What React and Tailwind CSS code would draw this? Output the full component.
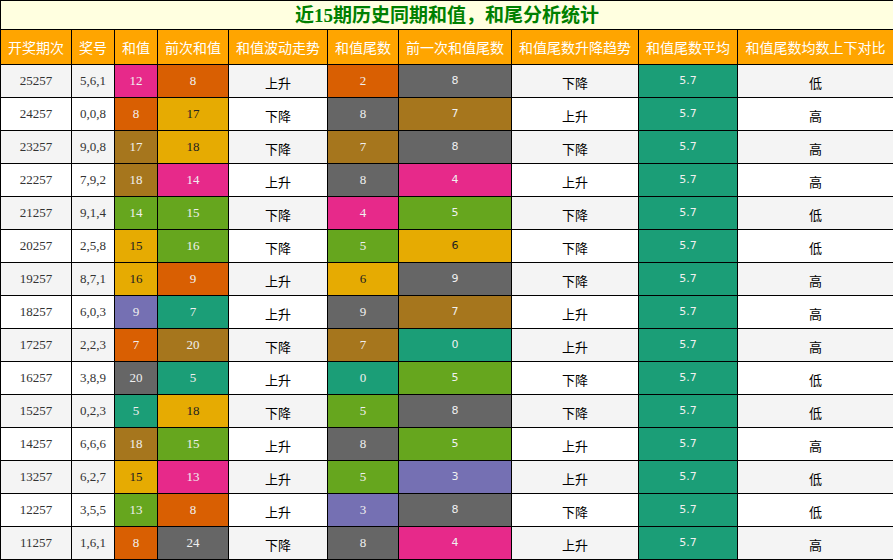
import React from 'react';

const C = {
  pink: 'bg-[#e7298a] text-[#f0f0f0]',
  orange: 'bg-[#d95f02] text-[#f0f0f0]',
  yellow: 'bg-[#e6ab02] text-[#222]',
  gray: 'bg-[#666666] text-[#f0f0f0]',
  brown: 'bg-[#a6761d] text-[#f0f0f0]',
  green: 'bg-[#66a61e] text-[#f0f0f0]',
  purple: 'bg-[#7570b3] text-[#f0f0f0]',
  teal: 'bg-[#1b9e77] text-[#f0f0f0]',
};

const headers = ['开奖期次', '奖号', '和值', '前次和值', '和值波动走势', '和值尾数', '前一次和值尾数', '和值尾数升降趋势', '和值尾数平均', '和值尾数均数上下对比'];
const widths = ['w-[71px]', 'w-[43px]', 'w-[43px]', 'w-[71px]', 'w-[99px]', 'w-[71px]', 'w-[113px]', 'w-[127px]', 'w-[99px]', 'w-[156px]'];

const rows = [
  ['25257', '5,6,1', 12, 'pink', 8, 'orange', '上升', 2, 'orange', 8, 'gray', '下降', '低'],
  ['24257', '0,0,8', 8, 'orange', 17, 'yellow', '下降', 8, 'gray', 7, 'brown', '上升', '高'],
  ['23257', '9,0,8', 17, 'brown', 18, 'yellow', '下降', 7, 'brown', 8, 'gray', '下降', '高'],
  ['22257', '7,9,2', 18, 'brown', 14, 'pink', '上升', 8, 'gray', 4, 'pink', '上升', '高'],
  ['21257', '9,1,4', 14, 'green', 15, 'green', '下降', 4, 'pink', 5, 'green', '下降', '低'],
  ['20257', '2,5,8', 15, 'yellow', 16, 'green', '下降', 5, 'green', 6, 'yellow', '下降', '低'],
  ['19257', '8,7,1', 16, 'yellow', 9, 'orange', '上升', 6, 'yellow', 9, 'gray', '下降', '高'],
  ['18257', '6,0,3', 9, 'purple', 7, 'teal', '上升', 9, 'gray', 7, 'brown', '上升', '高'],
  ['17257', '2,2,3', 7, 'orange', 20, 'brown', '下降', 7, 'brown', 0, 'teal', '上升', '高'],
  ['16257', '3,8,9', 20, 'gray', 5, 'teal', '上升', 0, 'teal', 5, 'green', '下降', '低'],
  ['15257', '0,2,3', 5, 'teal', 18, 'yellow', '下降', 5, 'green', 8, 'gray', '下降', '低'],
  ['14257', '6,6,6', 18, 'brown', 15, 'green', '上升', 8, 'gray', 5, 'green', '上升', '高'],
  ['13257', '6,2,7', 15, 'yellow', 13, 'pink', '上升', 5, 'green', 3, 'purple', '上升', '低'],
  ['12257', '3,5,5', 13, 'green', 8, 'orange', '上升', 3, 'purple', 8, 'gray', '下降', '低'],
  ['11257', '1,6,1', 8, 'orange', 24, 'gray', '下降', 8, 'gray', 4, 'pink', '上升', '高'],
];

const serif = "font-['Liberation_Serif','Noto_Sans_CJK_SC',serif]";
const sans = "font-['DejaVu_Sans','Noto_Sans_CJK_SC',sans-serif]";
const cjk = "font-['Noto_Sans_CJK_SC',sans-serif]";

export default function App() {
  return (
    <div className="w-[893px] h-[560px] bg-white overflow-hidden">
      <table className="w-[893px] table-fixed border-collapse text-center">
        <colgroup>
          {widths.map((w, i) => <col key={i} className={w} />)}
        </colgroup>
        <thead>
          <tr>
            <th colSpan={10} className={`h-[29px] border border-black bg-[#ffffe0] text-[#008000] text-[19px] font-bold leading-none p-0 ${serif}`}>
              近15期历史同期和值，和尾分析统计
            </th>
          </tr>
          <tr>
            {headers.map((h) => (
              <th key={h} className={`h-[35px] border border-black bg-[#ffa500] text-white text-[14px] font-normal p-0 whitespace-nowrap ${cjk}`}>
                {h}
              </th>
            ))}
          </tr>
        </thead>
        <tbody>
          {rows.map((r, i) => {
            const bg = i % 2 === 0 ? 'bg-[#f4f4f4]' : 'bg-white';
            const num = `border border-black text-[13px] p-0 ${serif}`;
            const word = `border border-black p-0 pt-[3px] text-[13px] text-black ${cjk} ${bg}`;
            return (
              <tr key={r[0]} className="h-[33px]">
                <td className={`${num} ${bg} text-[#333]`}>{r[0]}</td>
                <td className={`${num} ${bg} text-[#333]`}>{r[1]}</td>
                <td className={`${num} ${C[r[3]]}`}>{r[2]}</td>
                <td className={`${num} ${C[r[5]]}`}>{r[4]}</td>
                <td className={word}>{r[6]}</td>
                <td className={`${num} ${C[r[8]]}`}>{r[7]}</td>
                <td className={`border border-black text-[11px] p-0 ${sans} ${C[r[10]]}`}>{r[9]}</td>
                <td className={word}>{r[11]}</td>
                <td className={`border border-black text-[11px] p-0 ${sans} ${C.teal}`}>5.7</td>
                <td className={word}>{r[12]}</td>
              </tr>
            );
          })}
        </tbody>
      </table>
    </div>
  );
}
